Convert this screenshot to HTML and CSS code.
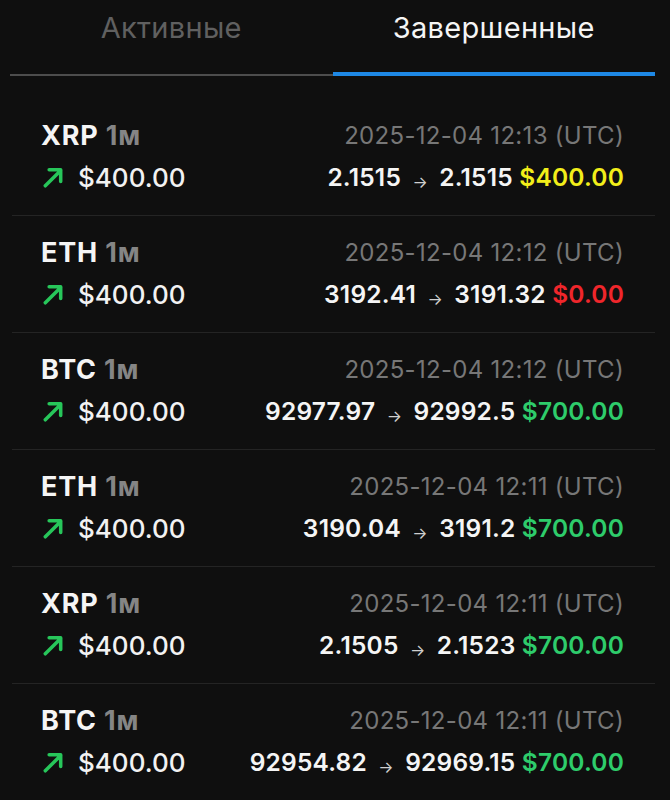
FILE: index.html
```html
<!DOCTYPE html>
<html lang="ru">
<head>
    <meta charset="UTF-8">
    <meta name="viewport" content="width=device-width, initial-scale=1.0">
    <title>Сделки</title>
    <link rel="stylesheet" href="styles.css">
</head>
<body>
    <!-- Вкладки -->
    <div class="tabs">
        <button class="tab">Активные</button>
        <button class="tab active">Завершенные</button>
    </div>

    <!-- Список сделок -->
    <div class="deals">
        <div class="deal">
            <div class="deal-line">
                <div class="deal-title">XRP <span class="deal-tf">1м</span></div>
                <div class="deal-date">2025-12-04 12:13 (UTC)</div>
            </div>
            <div class="deal-line">
                <div class="deal-amount">
                    <svg class="up-icon" viewBox="0 0 20 20"><path d="M3 18L17 4M6.5 3.5H17V14"/></svg>
                    <span>$400.00</span>
                </div>
                <div class="deal-prices">2.1515 <span class="arr">→</span> 2.1515 <span class="res draw">$400.00</span></div>
            </div>
        </div>

        <div class="deal">
            <div class="deal-line">
                <div class="deal-title">ETH <span class="deal-tf">1м</span></div>
                <div class="deal-date">2025-12-04 12:12 (UTC)</div>
            </div>
            <div class="deal-line">
                <div class="deal-amount">
                    <svg class="up-icon" viewBox="0 0 20 20"><path d="M3 18L17 4M6.5 3.5H17V14"/></svg>
                    <span>$400.00</span>
                </div>
                <div class="deal-prices">3192.41 <span class="arr">→</span> 3191.32 <span class="res loss">$0.00</span></div>
            </div>
        </div>

        <div class="deal">
            <div class="deal-line">
                <div class="deal-title">BTC <span class="deal-tf">1м</span></div>
                <div class="deal-date">2025-12-04 12:12 (UTC)</div>
            </div>
            <div class="deal-line">
                <div class="deal-amount">
                    <svg class="up-icon" viewBox="0 0 20 20"><path d="M3 18L17 4M6.5 3.5H17V14"/></svg>
                    <span>$400.00</span>
                </div>
                <div class="deal-prices">92977.97 <span class="arr">→</span> 92992.5 <span class="res win">$700.00</span></div>
            </div>
        </div>

        <div class="deal">
            <div class="deal-line">
                <div class="deal-title">ETH <span class="deal-tf">1м</span></div>
                <div class="deal-date">2025-12-04 12:11 (UTC)</div>
            </div>
            <div class="deal-line">
                <div class="deal-amount">
                    <svg class="up-icon" viewBox="0 0 20 20"><path d="M3 18L17 4M6.5 3.5H17V14"/></svg>
                    <span>$400.00</span>
                </div>
                <div class="deal-prices">3190.04 <span class="arr">→</span> 3191.2 <span class="res win">$700.00</span></div>
            </div>
        </div>

        <div class="deal">
            <div class="deal-line">
                <div class="deal-title">XRP <span class="deal-tf">1м</span></div>
                <div class="deal-date">2025-12-04 12:11 (UTC)</div>
            </div>
            <div class="deal-line">
                <div class="deal-amount">
                    <svg class="up-icon" viewBox="0 0 20 20"><path d="M3 18L17 4M6.5 3.5H17V14"/></svg>
                    <span>$400.00</span>
                </div>
                <div class="deal-prices">2.1505 <span class="arr">→</span> 2.1523 <span class="res win">$700.00</span></div>
            </div>
        </div>

        <div class="deal">
            <div class="deal-line">
                <div class="deal-title">BTC <span class="deal-tf">1м</span></div>
                <div class="deal-date">2025-12-04 12:11 (UTC)</div>
            </div>
            <div class="deal-line">
                <div class="deal-amount">
                    <svg class="up-icon" viewBox="0 0 20 20"><path d="M3 18L17 4M6.5 3.5H17V14"/></svg>
                    <span>$400.00</span>
                </div>
                <div class="deal-prices">92954.82 <span class="arr">→</span> 92969.15 <span class="res win">$700.00</span></div>
            </div>
        </div>
    </div>
</body>
</html>
```

FILE: styles.css
```css
* {
    margin: 0;
    padding: 0;
    box-sizing: border-box;
}

body {
    font-family: 'Inter', 'Noto Sans', sans-serif;
    background: #0f0f0f;
    color: #f2f2f2;
}

/* Вкладки */
.tabs {
    display: flex;
    margin: 0 15px 0 10px;
}

.tab {
    flex: 1;
    height: 76px;
    padding-top: 10px;
    border: none;
    border-bottom: 2px solid #4d4d4d;
    background: none;
    font-family: inherit;
    font-size: 29px;
    line-height: 36px;
    letter-spacing: 0.3px;
    color: #606060;
    display: flex;
    justify-content: center;
    align-items: flex-start;
    cursor: pointer;
}

.tab.active {
    color: #f5f5f5;
    border-bottom: 4px solid #1e88e5;
}

/* Список сделок */
.deals {
    margin: 0 15px 0 12px;
    padding-top: 23px;
}

.deal {
    padding: 19px 31px 21px 29px;
    border-bottom: 1px solid #242424;
    display: flex;
    flex-direction: column;
    gap: 8px;
}

.deal-line {
    display: flex;
    justify-content: space-between;
    align-items: center;
    height: 34px;
}

.deal-title {
    font-size: 27px;
    font-weight: 700;
    letter-spacing: 0.8px;
    color: #f5f5f5;
}

.deal-tf {
    color: #858585;
}

.deal-date {
    font-size: 24px;
    letter-spacing: 0.3px;
    color: #777;
}

.deal-amount {
    display: flex;
    align-items: center;
    gap: 14px;
    font-size: 26px;
    font-weight: 500;
}

.up-icon {
    width: 22px;
    height: 22px;
    margin-left: 1px;
    fill: none;
    stroke: #27c65a;
    stroke-width: 3.2;
    stroke-linecap: round;
    stroke-linejoin: round;
}

.deal-prices {
    font-size: 24.5px;
    font-weight: 600;
    letter-spacing: 0.2px;
    color: #f5f5f5;
}

.arr {
    display: inline-block;
    margin: 0 5px;
    font-size: 16px;
    font-weight: 400;
    color: #cfcfcf;
    transform: translateY(2px);
}

.res.draw { color: #f2ee1a; }
.res.loss { color: #f0262b; }
.res.win  { color: #2ecc6b; }
```
